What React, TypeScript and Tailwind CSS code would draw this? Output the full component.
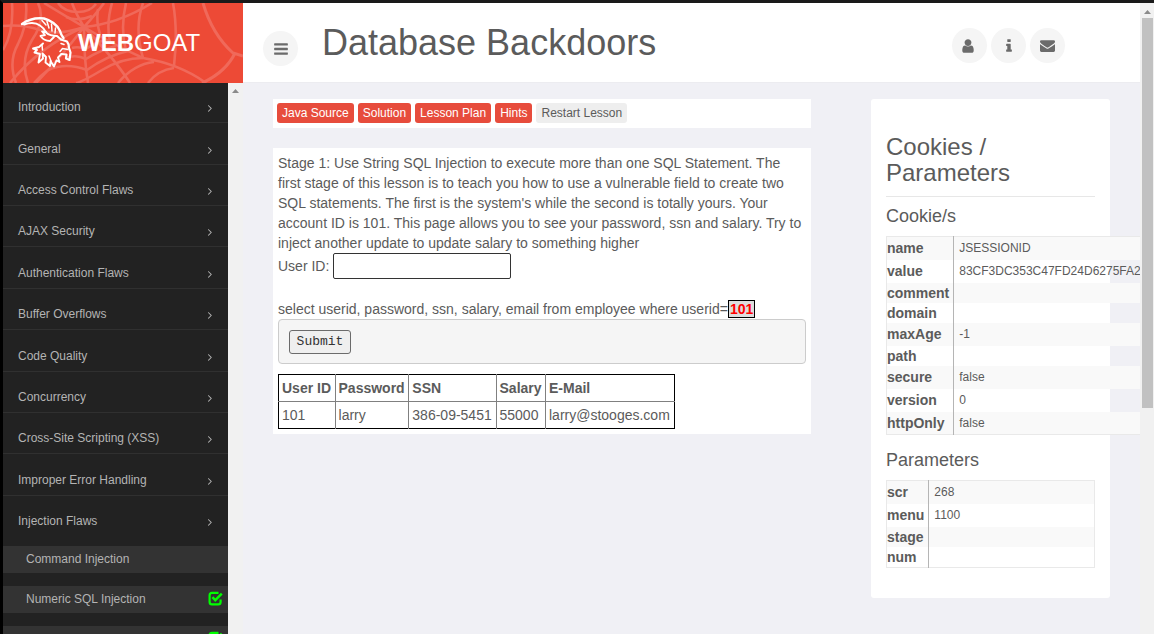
import type { ReactNode } from 'react';

const LESSON_CATEGORIES = [
  'Introduction',
  'General',
  'Access Control Flaws',
  'AJAX Security',
  'Authentication Flaws',
  'Buffer Overflows',
  'Code Quality',
  'Concurrency',
  'Cross-Site Scripting (XSS)',
  'Improper Error Handling',
  'Injection Flaws',
];

const LESSONS = [
  { name: 'Command Injection', done: false },
  { name: 'Numeric SQL Injection', done: true },
  { name: '', done: true },
];

const LESSON_ACTIONS = ['Java Source', 'Solution', 'Lesson Plan', 'Hints'];

const COOKIE = [
  ['name', 'JSESSIONID'],
  ['value', '83CF3DC353C47FD24D6275FA2'],
  ['comment', ''],
  ['domain', ''],
  ['maxAge', '-1'],
  ['path', ''],
  ['secure', 'false'],
  ['version', '0'],
  ['httpOnly', 'false'],
];

const PARAMS = [
  ['scr', '268'],
  ['menu', '1100'],
  ['stage', ''],
  ['num', ''],
];

const ICONS = {
  bars: 'M1664 1344v128q0 26-19 45t-45 19h-1408q-26 0-45-19t-19-45v-128q0-26 19-45t45-19h1408q26 0 45 19t19 45zm0-512v128q0 26-19 45t-45 19h-1408q-26 0-45-19t-19-45v-128q0-26 19-45t45-19h1408q26 0 45 19t19 45zm0-512v128q0 26-19 45t-45 19h-1408q-26 0-45-19t-19-45v-128q0-26 19-45t45-19h1408q26 0 45 19t19 45z',
  user: 'M1536 1399q0 109-62.5 187t-150.5 78h-854q-88 0-150.5-78t-62.5-187q0-85 8.5-160.5t31.5-152 58.5-131 94-89 134.5-34.5q131 128 313 128t313-128q76 0 134.5 34.5t94 89 58.5 131 31.5 152 8.5 160.5zm-256-887q0 159-112.5 271.5t-271.5 112.5-271.5-112.5-112.5-271.5 112.5-271.5 271.5-112.5 271.5 112.5 112.5 271.5z',
  info: 'M1216 1344v128q0 26-19 45t-45 19h-512q-26 0-45-19t-19-45v-128q0-26 19-45t45-19h64v-384h-64q-26 0-45-19t-19-45v-128q0-26 19-45t45-19h384q26 0 45 19t19 45v576h64q26 0 45 19t19 45zm-128-1152v192q0 26-19 45t-45 19h-256q-26 0-45-19t-19-45v-192q0-26 19-45t45-19h256q26 0 45 19t19 45z',
  envelope:
    'M1792 710v794q0 66-47 113t-113 47h-1472q-66 0-113-47t-47-113v-794q44 49 101 87 362 246 497 345 57 42 92.5 65.5t94.5 48 110 24.5h2q51 0 110-24.5t94.5-48 92.5-65.5q170-123 498-345 57-39 100-87zm0-294q0 79-49 151t-122 123q-376 261-468 325-10 7-42.5 31t-54 38.5-52 32.5-57.5 27-50 9h-2q-23 0-50-9t-57.5-27-52-32.5-54-38.5-42.5-31q-91-64-262-182.5t-205-142.5q-62-42-117-115.5t-55-136.5q0-78 41.5-130t118.5-52h1472q65 0 112.5 47t47.5 113z',
  angleRight:
    'M1171 960q0 13-10 23l-466 466q-10 10-23 10t-23-10l-50-50q-10-10-10-23t10-23l393-393-393-393q-10-10-10-23t10-23l50-50q10-10 23-10t23 10l466 466q10 10 10 23z',
};

function Icon({ name, className }: { name: keyof typeof ICONS; className: string }) {
  return (
    <svg viewBox="0 0 1792 1792" fill="currentColor" className={className} aria-hidden="true">
      <path d={ICONS[name]} />
    </svg>
  );
}

function DoneIcon() {
  return (
    <svg viewBox="0 0 15 15" fill="none" stroke="currentColor" className="size-[15px] text-[#0f0]" aria-hidden="true">
      <path d="M10.5 1.9H4Q1.6 1.9 1.6 4.3V10.9Q1.6 13.3 4 13.3H10.2Q12.6 13.3 12.6 10.9V8.6" strokeWidth="2.2" />
      <path d="M4.4 6.2L7.3 9.2L13.8 2.6" strokeWidth="2.4" />
    </svg>
  );
}

function RoundButton({ label, children }: { label: string; children: ReactNode }) {
  return (
    <button
      type="button"
      aria-label={label}
      className="flex size-[35px] items-center justify-center rounded-full bg-[#f5f5f5] text-[#6b6b6b]"
    >
      {children}
    </button>
  );
}

function ScrollArrow() {
  return (
    <svg viewBox="0 0 7 4" className="h-1 w-[7px] text-[#8a8a8a]" fill="currentColor" aria-hidden="true">
      <path d="M3.5 0L7 4H0z" />
    </svg>
  );
}

function Logo() {
  return (
    <a href="#home" className="relative flex h-20 w-60 shrink-0 items-center overflow-hidden bg-[#ed4a36] text-white">
      <svg viewBox="3 3 240 80" className="absolute inset-0 h-full w-full" fill="none" aria-hidden="true">
        <g stroke="#f0695a" strokeWidth="2.6">
          <path d="M3 26Q22 24 40 30T84 27" />
          <path d="M84 27Q62 14 44 3M84 27Q76 14 72 3M84 27Q96 14 104 3M84 27Q118 24 152 3" />
          <path d="M84 27Q112 44 143 58Q180 64 206 83" />
          <path d="M84 27Q84 60 88 83M84 27Q62 56 36 83M84 27Q40 46 10 83M84 27Q114 58 130 83" />
          <path d="M173 3Q178 30 174 66" />
          <path d="M203 3Q212 34 233 53L243 56M235 53Q226 72 202 83" strokeWidth="3" />
          <path d="M143 3Q134 28 143 58" />
          <path d="M126 3Q120 28 126 51" />
          <path d="M112 3Q106 24 110 42" />
          <path d="M98 9Q96 22 100 34" />
          <path d="M143 58Q122 58 102 70T76 83" />
          <path d="M154 62Q134 64 118 83M174 68Q158 70 148 83" />
          <path d="M128 51Q106 56 87 70Q66 62 48 70Q40 76 34 83" />
          <path d="M116 46Q100 50 86 59Q76 54 66 58M106 40Q96 42 86 49Q78 46 72 48" />
          <path d="M38 3Q46 20 32 40Q20 60 28 83" />
          <path d="M26 3Q28 24 18 44Q8 62 16 83M12 3Q14 32 3 50" />
          <path d="M58 3Q64 12 78 12Q90 12 96 4M66 17Q78 22 92 16" />
        </g>
        <g stroke="#fff" strokeLinejoin="round" strokeLinecap="round">
          <path d="M22 24Q32 17 44 18.5Q56 22 60 31Q61 35 63.500 38" strokeWidth="2.4" />
          <path d="M24 24.500Q34 21 40 25.500Q44 28 46 32.500Q50 36 57 36L61 39.500" strokeWidth="2" />
          <path d="M42 20.500L46 25M47 21.500L49 28M51.500 24L52 31M55.500 28L55 33" strokeWidth="1.500" />
          <path d="M46 32L42 31.500L45 35L40.500 36Q44 41 50 41L54 37" strokeWidth="1.800" />
          <path d="M61 39.500L67 41.500Q69 44 69 48L70.500 52.500L69.500 60L66 58.500L66.500 54.500L61.500 54" strokeWidth="2.200" />
          <path d="M68 49.500L62.500 48.500L60 51.500M64 44.500L61 43.500" strokeWidth="1.500" />
          <path d="M43 43.500L39 47L33 48.500L37 50L34.500 52.500L40 54L38.500 62.500L43 58.500L42.500 53.500L46 57L45.500 62.500L50 66L50.500 61L54 66.500L56.500 60.500L59.500 62L58 57.500L61.500 54" strokeWidth="1.900" />
          <path d="M42 45L42.500 50M51 61L49 56" strokeWidth="1.500" />
        </g>
      </svg>
      <span className="relative pl-[75px] text-2xl">
        <b>WEB</b>GOAT
      </span>
    </a>
  );
}

function Sidebar() {
  return (
    <nav className="w-[225px] shrink-0 overflow-hidden bg-[#222] text-xs text-[#b4b4b4]">
      <ul className="-mt-px flex h-[454px] flex-col">
        {LESSON_CATEGORIES.map((c) => (
          <li key={c} className="flex-1 border-b border-[#303030] last:border-b-0">
            <a href="#category" className="flex h-full items-end justify-between pr-3 pb-1.5 pl-[15px]">
              <span className="leading-[17px]">{c}</span>
              <Icon name="angleRight" className="mb-0.5 size-3" />
            </a>
          </li>
        ))}
      </ul>
      <ul className="mt-2.5 space-y-[13px]">
        {LESSONS.map((l, i) => (
          <li key={i}>
            <a href="#lesson" className="flex h-[27px] items-center justify-between bg-[#333] pr-[5px] pb-0.5 pl-[23px]">
              <span>{l.name}</span>
              {l.done && <DoneIcon />}
            </a>
          </li>
        ))}
      </ul>
    </nav>
  );
}

function InfoTable({ rows, className }: { rows: string[][]; className: string }) {
  return (
    <table className={`border-collapse border border-[#e9e9e9] leading-5 ${className}`}>
      <tbody>
        {rows.map(([key, value]) => (
          <tr key={key} className="odd:bg-[#f9f9f9]">
            <th scope="row" className="w-px border-r border-[#b5b5b5] p-0 pr-1 text-left align-middle">
              {key}
            </th>
            <td className={value ? 'h-[23px] px-[5px] text-xs' : 'h-5 px-[5px] text-xs'}>{value}</td>
          </tr>
        ))}
      </tbody>
    </table>
  );
}

function LessonPanel() {
  return (
    <section className="bg-white p-[5px]">
      <p>
        Stage 1: Use String SQL Injection to execute more than one SQL Statement. The first stage of this lesson is to
        teach you how to use a vulnerable field to create two SQL statements. The first is the system's while the second
        is totally yours. Your account ID is 101. This page allows you to see your password, ssn and salary. Try to
        inject another update to update salary to something higher
      </p>
      <form onSubmit={(e) => e.preventDefault()}>
        <div className="flex items-center gap-1">
          <label htmlFor="userid">User ID:</label>
          <input id="userid" type="text" className="h-[26px] w-[178px] rounded-xs border border-[#333] bg-white px-1" />
        </div>
        <p className="mt-5">
          select userid, password, ssn, salary, email from employee where userid=
          <b className="border border-black bg-[#ddd] px-px text-[#f00]">101</b>
        </p>
        <div className="rounded border border-[#ccc] bg-[#f5f5f5] p-2.5 pb-[9px]">
          <button
            type="submit"
            className="block h-6 w-[62px] rounded-[3px] border border-[#6b6b6b] bg-[#efefef] font-['Liberation_Mono',monospace] text-[13px] text-[#333]"
          >
            Submit
          </button>
        </div>
      </form>
      <table className="mt-2.5 w-[397px] border-collapse border border-black">
        <thead>
          <tr>
            {['User ID', 'Password', 'SSN', 'Salary', 'E-Mail'].map((h) => (
              <th key={h} className="border-r border-b border-[#808080] p-[3px] text-left last:border-r-0">
                {h}
              </th>
            ))}
          </tr>
        </thead>
        <tbody>
          <tr>
            {['101', 'larry', '386-09-5451', '55000', 'larry@stooges.com'].map((v) => (
              <td key={v} className="border-r border-[#808080] p-[3px] last:border-r-0">
                {v}
              </td>
            ))}
          </tr>
        </tbody>
      </table>
    </section>
  );
}

export default function App() {
  return (
    <div className="flex h-screen overflow-hidden border-t-[3px] border-l-[3px] border-t-[#1a1a1a] border-l-black bg-[#f0f0f5] font-['Liberation_Sans',Arial,sans-serif] text-sm/5 text-[#5b5b5b]">
      <div className="flex min-w-0 flex-1 flex-col overflow-hidden">
        <header className="flex h-20 shrink-0 bg-white">
          <Logo />
          <div className="flex flex-1 items-start border-b border-[#ececf0] pr-[75px] pl-5">
            <div className="pt-7">
              <RoundButton label="Toggle menu">
                <Icon name="bars" className="size-4" />
              </RoundButton>
            </div>
            <h1 className="flex-1 pt-5 pl-6 text-4xl leading-10">Database Backdoors</h1>
            <div className="flex gap-1 pt-[25px]">
              <RoundButton label="User">
                <Icon name="user" className="mr-1 size-4" />
              </RoundButton>
              <RoundButton label="About">
                <Icon name="info" className="size-4" />
              </RoundButton>
              <RoundButton label="Contact">
                <Icon name="envelope" className="size-[15px]" />
              </RoundButton>
            </div>
          </div>
        </header>

        <div className="flex min-h-0 flex-1">
          <Sidebar />
          <div className="flex w-[15px] shrink-0 justify-center bg-[#f1f1f1] pt-1.5">
            <ScrollArrow />
          </div>
          <main className="flex min-w-0 flex-1 items-start gap-[60px] px-[30px] pt-4">
            <div className="min-w-0 flex-1">
              <div className="mb-5 flex gap-1 bg-white px-1 pt-1 pb-[5px] text-xs">
                {LESSON_ACTIONS.map((a) => (
                  <button key={a} type="button" className="h-5 rounded-[3px] bg-[#e74c3c] px-[5px] text-white">
                    {a}
                  </button>
                ))}
                <button type="button" className="h-5 rounded-[3px] bg-[#eee] px-[5px]">
                  Restart Lesson
                </button>
              </div>
              <LessonPanel />
            </div>

            <aside className="w-[239px] shrink-0 rounded-[3px] bg-white px-[15px] pt-[35px] pb-[30px]">
              <h2 className="border-b border-[#e7e7e7] pb-2.5 text-2xl leading-[26px]">Cookies / Parameters</h2>
              <h3 className="mt-[9px] mb-2.5 text-lg leading-5">Cookie/s</h3>
              <InfoTable rows={COOKIE} className="min-w-full" />
              <h3 className="mt-[15px] mb-2.5 text-lg leading-5">Parameters</h3>
              <InfoTable rows={PARAMS} className="w-full" />
            </aside>
          </main>
        </div>
      </div>

      <div className="flex w-3.5 shrink-0 flex-col items-center bg-[#f1f1f1] pt-[7px]">
        <ScrollArrow />
        <div className="mt-1 h-[390px] w-[11px] bg-[#c1c1c1]" />
      </div>
    </div>
  );
}
